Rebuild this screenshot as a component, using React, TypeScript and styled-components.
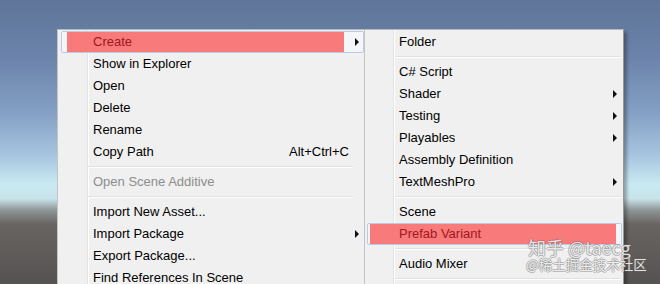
import React from "react";
import styled, { createGlobalStyle } from "styled-components";

const GlobalStyle = createGlobalStyle`
  html, body {
    margin: 0;
    padding: 0;
    overflow: hidden;
  }
  body {
    font-family: "Liberation Sans", Arial, sans-serif;
  }
`;

// unity scene view sky behind the menus
const Scene = styled.main`
  position: relative;
  width: 660px;
  height: 284px;
  overflow: hidden;
  box-sizing: border-box;
  padding: 29px 0 0 57px;
  display: flex;
  align-items: flex-start;
  background: linear-gradient(
    to bottom,
    #5f7599 0%,
    #6b83aa 20%,
    #85a0c5 40%,
    #a8c6df 55%,
    #c9eaf3 65%,
    #c8e3e9 70%,
    #8f9596 74%,
    #686462 79%,
    #555251 100%
  );
`;

const Menu = styled.div<{ $width: number; $gutter: number; $padLeft: number; $padRight: number; $overlap?: boolean }>`
  flex: none;
  width: ${({ $width }) => $width}px;
  box-sizing: border-box;
  margin-left: ${({ $overlap }) => ($overlap ? -1 : 0)}px;
  padding: 1px ${({ $padRight }) => $padRight}px 4px ${({ $padLeft }) => $padLeft}px;
  border: 1px solid #979797;
  border-top-color: #b8b8b8;
  border-left-color: #c4c4c4;
  background:
    linear-gradient(
      to right,
      transparent ${({ $gutter }) => $gutter}px,
      #e2e3e3 ${({ $gutter }) => $gutter}px,
      #e2e3e3 ${({ $gutter }) => $gutter + 1}px,
      #ffffff ${({ $gutter }) => $gutter + 1}px,
      #ffffff ${({ $gutter }) => $gutter + 2}px,
      transparent ${({ $gutter }) => $gutter + 2}px
    ),
    #f0f0f0;
  box-shadow: 3px 3px 3px rgba(0, 0, 0, 0.3);
  display: flex;
  flex-direction: column;
`;

const Row = styled.div<{ $active?: boolean; $disabled?: boolean }>`
  position: relative;
  height: 22px;
  box-sizing: border-box;
  display: grid;
  grid-template-columns: 1fr auto 14px;
  align-items: center;
  padding-left: 31px;
  padding-bottom: 1px;
  border: 1px solid ${({ $active }) => ($active ? "#bccbe4" : "transparent")};
  border-radius: 2px;
  background: ${({ $active }) => ($active ? "#f4f6fa" : "transparent")};
  color: ${({ $active, $disabled }) => ($active ? "#a3161b" : $disabled ? "#8d8d8d" : "#000")};
  font-size: 13px;
  white-space: nowrap;
`;

const Label = styled.span`
  position: relative;
  z-index: 1;
`;

const Shortcut = styled.span`
  position: relative;
  z-index: 1;
`;

const Arrow = styled.span`
  justify-self: end;
  margin-right: 4px;
  width: 0;
  height: 0;
  border-left: 4px solid #111;
  border-top: 4px solid transparent;
  border-bottom: 4px solid transparent;
`;

// the red marker someone painted over the screenshot
const Mark = styled.span<{ $l: number; $r: number }>`
  position: absolute;
  top: 0;
  bottom: 0;
  left: ${({ $l }) => $l}px;
  right: ${({ $r }) => $r}px;
  background: #f87a7b;
`;

const Separator = styled.div<{ $inL: number; $inR: number }>`
  height: 8px;
  display: flex;
  align-items: center;
  margin: 0 ${({ $inR }) => $inR}px 0 ${({ $inL }) => $inL}px;
  &::before {
    content: "";
    flex: 1;
    border-top: 1px solid #e0e0e0;
    border-bottom: 1px solid #ffffff;
  }
`;

const Watermark = styled.div`
  position: absolute;
  left: 526px;
  top: 238px;
  color: rgba(255, 255, 255, 0.82);
  font-family: "Noto Sans CJK SC", "Noto Sans", sans-serif;
  text-shadow:
    1px 0 0 rgba(100, 100, 100, 0.4),
    -1px 0 0 rgba(100, 100, 100, 0.4),
    0 1px 0 rgba(100, 100, 100, 0.4),
    0 -1px 0 rgba(100, 100, 100, 0.4);
  pointer-events: none;
`;

const MarkLine = styled.div<{ $size: number; $lh: number; $shift?: number }>`
  font-size: ${({ $size }) => $size}px;
  line-height: ${({ $lh }) => $lh}px;
  margin-left: ${({ $shift }) => $shift || 0}px;
  white-space: nowrap;
`;

type Item =
  | { sep: true }
  | { sep?: false; label: string; sub?: boolean; shortcut?: string; disabled?: boolean; mark?: [number, number] };

const leftItems: Item[] = [
  { label: "Create", sub: true, mark: [5, 19] },
  { label: "Show in Explorer" },
  { label: "Open" },
  { label: "Delete" },
  { label: "Rename" },
  { label: "Copy Path", shortcut: "Alt+Ctrl+C" },
  { sep: true },
  { label: "Open Scene Additive", disabled: true },
  { sep: true },
  { label: "Import New Asset..." },
  { label: "Import Package", sub: true },
  { label: "Export Package..." },
  { label: "Find References In Scene" },
];

const rightItems: Item[] = [
  { label: "Folder" },
  { sep: true },
  { label: "C# Script" },
  { label: "Shader", sub: true },
  { label: "Testing", sub: true },
  { label: "Playables", sub: true },
  { label: "Assembly Definition" },
  { label: "TextMeshPro", sub: true },
  { sep: true },
  { label: "Scene" },
  { label: "Prefab Variant", mark: [2, 5] },
  { sep: true },
  { label: "Audio Mixer" },
  { sep: true },
];

const MenuList = ({ items, sepL, sepR }: { items: Item[]; sepL: number; sepR: number }) => (
  <>
    {items.map((it, i) =>
      it.sep ? (
        <Separator key={i} $inL={sepL} $inR={sepR} />
      ) : (
        <Row key={i} $active={!!it.mark} $disabled={it.disabled}>
          {it.mark && <Mark $l={it.mark[0]} $r={it.mark[1]} />}
          <Label>{it.label}</Label>
          <Shortcut>{it.shortcut}</Shortcut>
          {it.sub ? <Arrow /> : <span />}
        </Row>
      )
    )}
  </>
);

export default function App() {
  return (
    <>
      <GlobalStyle />
      <Scene>
        <Menu $width={308} $gutter={29} $padLeft={3} $padRight={0}>
          <MenuList items={leftItems} sepL={27} sepR={11} />
        </Menu>
        <Menu $width={260} $gutter={28} $padLeft={2} $padRight={1} $overlap>
          <MenuList items={rightItems} sepL={28} sepR={1} />
        </Menu>
        <Watermark>
          <MarkLine $size={18} $lh={19} $shift={2}>知乎 @taecg</MarkLine>
          <MarkLine $size={13.5} $lh={14}>@稀土掘金技术社区</MarkLine>
        </Watermark>
      </Scene>
    </>
  );
}
